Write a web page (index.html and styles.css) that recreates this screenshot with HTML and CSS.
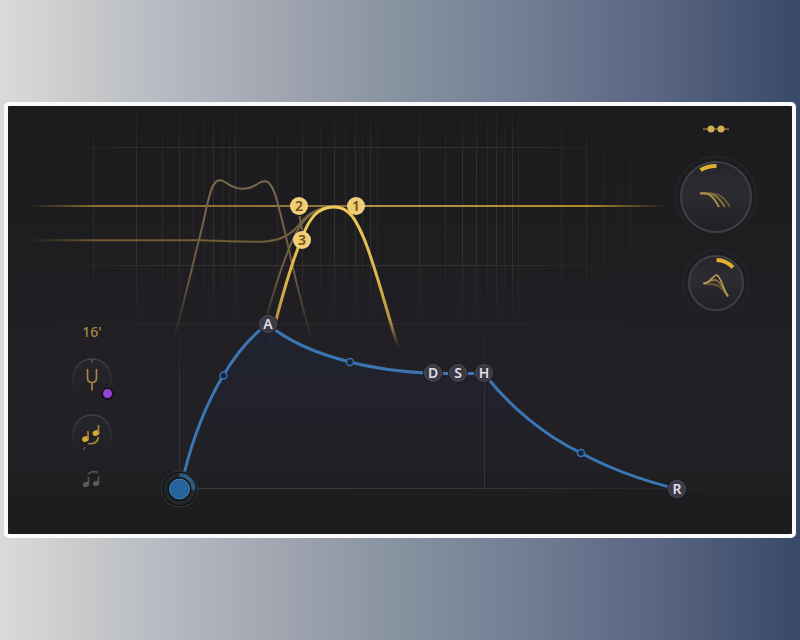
FILE: index.html
```html
<!DOCTYPE html>
<html lang="en">
<head>
<meta charset="utf-8">
<meta name="viewport" content="width=device-width, initial-scale=1">
<title>Filter and envelope</title>
<link rel="stylesheet" href="styles.css">
</head>
<body>
<main class="panel">
  <div class="graph">
    <svg class="plot" viewBox="8 106 784 428" aria-hidden="true">
      <defs>
        <linearGradient id="rows" gradientUnits="userSpaceOnUse" x1="50" y1="0" x2="630" y2="0">
          <stop offset="0" stop-color="#323234" stop-opacity="0"/><stop offset=".2" stop-color="#323234"/>
          <stop offset=".75" stop-color="#323234"/><stop offset="1" stop-color="#323234" stop-opacity="0"/>
        </linearGradient>
        <linearGradient id="cols" gradientUnits="userSpaceOnUse" x1="0" y1="106" x2="0" y2="328">
          <stop offset="0" stop-color="#303033" stop-opacity=".1"/><stop offset=".25" stop-color="#313134"/>
          <stop offset=".65" stop-color="#313134"/><stop offset="1" stop-color="#303033" stop-opacity="0"/>
        </linearGradient>
        <linearGradient id="lineLeft" gradientUnits="userSpaceOnUse" x1="28" y1="0" x2="300" y2="0">
          <stop offset="0" stop-color="#8c6f30" stop-opacity="0"/><stop offset=".25" stop-color="#8c6f30"/><stop offset="1" stop-color="#907439"/>
        </linearGradient>
        <linearGradient id="lineLow" gradientUnits="userSpaceOnUse" x1="28" y1="0" x2="300" y2="0">
          <stop offset="0" stop-color="#70592c" stop-opacity="0"/><stop offset=".25" stop-color="#70592c"/><stop offset="1" stop-color="#74603a"/>
        </linearGradient>
        <linearGradient id="lineRight" gradientUnits="userSpaceOnUse" x1="355" y1="0" x2="666" y2="0">
          <stop offset="0" stop-color="#b8933f"/><stop offset=".75" stop-color="#b18a2d"/><stop offset="1" stop-color="#b18a2d" stop-opacity="0"/>
        </linearGradient>
        <linearGradient id="band" gradientUnits="userSpaceOnUse" x1="0" y1="180" x2="0" y2="344">
          <stop offset="0" stop-color="#7d694e"/><stop offset=".6" stop-color="#6a5840"/><stop offset="1" stop-color="#60503b" stop-opacity="0"/>
        </linearGradient>
        <linearGradient id="bold" gradientUnits="userSpaceOnUse" x1="0" y1="206" x2="0" y2="348">
          <stop offset="0" stop-color="#f1c957"/><stop offset=".55" stop-color="#dcb247"/><stop offset=".8" stop-color="#b5933f"/><stop offset="1" stop-color="#a78945" stop-opacity="0"/>
        </linearGradient>
        <linearGradient id="area" gradientUnits="userSpaceOnUse" x1="0" y1="325" x2="0" y2="489">
          <stop offset="0" stop-color="#1c2a46" stop-opacity=".36"/><stop offset="1" stop-color="#20233a" stop-opacity=".04"/>
        </linearGradient>
        <linearGradient id="base" gradientUnits="userSpaceOnUse" x1="198" y1="0" x2="740" y2="0">
          <stop offset="0" stop-color="#3c3c3e"/><stop offset=".6" stop-color="#343436"/><stop offset="1" stop-color="#343436" stop-opacity="0"/>
        </linearGradient>
        <linearGradient id="stems" gradientUnits="userSpaceOnUse" x1="0" y1="325" x2="0" y2="489">
          <stop offset="0" stop-color="#353539" stop-opacity="0"/><stop offset=".4" stop-color="#353539"/><stop offset="1" stop-color="#353539"/>
        </linearGradient>
      </defs>
      <g fill="none">
        <path stroke="url(#rows)" d="M50 147.500H630M50 265.500H630"/>
        <path stroke="url(#rows)" opacity=".5" d="M50 324.500H630"/>
        <g stroke="url(#cols)">
          <path d="M136.500 106V328M179.500 106V328M213.500 106V328M235.500 106V328M302.500 106V328M334.500 106V328M355.500 106V328M370.500 106V328M419.500 106V328M462.500 106V328M476.500 106V328M496.500 106V328M512.500 106V328"/>
          <path opacity=".6" d="M93.500 106V328M162.500 106V328M193.500 106V328M204.500 106V328M222.500 106V328M229.500 106V328M277.500 106V328M320.500 106V328M345.500 106V328M362.500 106V328M377.500 106V328M445.500 106V328M487.500 106V328M504.500 106V328M518.500 106V328M561.500 106V328M586.500 106V328"/>
          <path opacity=".3" d="M603.500 106V328M618.500 106V328M630.500 106V328"/>
        </g>
        <path stroke="url(#base)" d="M198 488.500H740"/>
        <path stroke="url(#stems)" d="M179.500 325V470M484.500 325V489"/>
        <path fill="url(#area)" d="M180 489C191 445 204 405 223.500 375C236 356 250 336 267.500 324C290 343 318 354 350 362C377 369 403 372 433 373.500H484C510 405 545 437 581 453C612 470 645 481 677 489Z"/>
        <path stroke="url(#lineLeft)" stroke-width="2" d="M28 206H356"/>
        <path stroke="url(#lineLow)" stroke-width="2" d="M32 240.200H200C225 241 245 242 262 241.700C280 241 291 234 297 227C304 218 312 208 334 206"/>
        <path stroke="url(#band)" stroke-width="2" d="M172 344C184 305 193 262 200 236C206 212 208 197 212 188C216 179 220 179 225 182C237 191 248 191 259 183C266 179 270 181 275 194C285 224 296 292 313 343"/>
        <path stroke="url(#band)" stroke-width="2" d="M266 319C274 290 284 257 296 233C305 216 316 208 334 206.500M268 346L277 318M299.500 216L302 230"/>
        <path stroke="url(#lineRight)" stroke-width="2" d="M355 206H666"/>
        <path stroke="url(#bold)" stroke-width="3" d="M275 324C282 297 291 264 302 238C309 218 318 207 334 207C349 207 356 219 365 241C377 272 386 309 398 347"/>
        <path stroke="#3b76b3" stroke-width="3" d="M184 474C193 438 206 404 223.500 375C236 354 250 337 267.500 324C290 343 318 354 350 362C377 369 403 372 433 373.500H484C510 407 545 436 581 453C612 470 645 481 677 489"/>
        <g fill="#182434" stroke="#3473b4" stroke-width="1.500"><circle cx="223.500" cy="375.500" r="3.500"/><circle cx="350" cy="362" r="3.500"/><circle cx="581" cy="453" r="3.500"/></g>
        <circle cx="179.500" cy="489" r="18" fill="#111315" stroke="#37383b"/>
        <circle cx="179.500" cy="489" r="14" stroke="#242729" stroke-width="4"/>
        <path stroke="#315b7e" stroke-width="4" d="M179.500 475A14 14 0 0 1 193.500 490"/>
        <circle cx="179.500" cy="489" r="10" fill="#25639c" stroke="#4282b6"/>
      </g>
    </svg>
    <button class="node band" style="--x:291;--y:100">2</button>
    <button class="node band" style="--x:348;--y:100">1</button>
    <button class="node band" style="--x:294;--y:134">3</button>
    <button class="node stage" style="--x:260;--y:218">A</button>
    <button class="node stage" style="--x:425;--y:267">D</button>
    <button class="node stage" style="--x:450;--y:267">S</button>
    <button class="node stage" style="--x:476;--y:267">H</button>
    <button class="node stage" style="--x:669;--y:383">R</button>
  </div>
  <div class="controls">
    <section class="pitch" aria-label="Pitch">
      <button class="octave">16'</button>
      <label class="knob small">
        <input type="range" aria-label="Tuning">
        <svg viewBox="0 0 40 40" fill="none" stroke="#a68343" stroke-width="2" aria-hidden="true">
          <defs>
            <linearGradient id="rim" x1="0" y1="0" x2="0" y2="1"><stop stop-color="#424146"/><stop offset=".9" stop-color="#424146" stop-opacity="0"/></linearGradient>
            <linearGradient id="dial" x1="0" y1="0" x2="0" y2="1"><stop stop-color="#27262a"/><stop offset="1" stop-color="#201f23"/></linearGradient>
          </defs>
          <circle cx="20" cy="20" r="19" fill="url(#dial)" stroke="url(#rim)" stroke-width="1.500"/>
          <path stroke="#665438" stroke-width="1.500" d="M20 1V5"/>
          <path stroke-width="1.700" d="M15.500 11V20Q15.500 24.500 20 24.500Q24.500 24.500 24.500 20V11M20 24.500V32.500"/>
          <circle cx="35.500" cy="35.500" r="5.500" fill="#9145d4" stroke="#17131c"/>
        </svg>
      </label>
      <label class="knob small">
        <input type="range" aria-label="Glide">
        <svg viewBox="0 0 40 40" fill="none" stroke="#a6823a" stroke-width="1.700" aria-hidden="true">
          <circle cx="20" cy="20" r="19" fill="url(#dial)" stroke="url(#rim)" stroke-width="1.500"/>
          <g fill="#d5a937" stroke="none"><ellipse cx="13.500" cy="25" rx="3.500" ry="2.800" transform="rotate(-25 13.500 25)"/><ellipse cx="24" cy="19" rx="3.500" ry="2.800" transform="rotate(-25 24 19)"/></g>
          <path d="M16 25V17M26.500 19V11M16 29.500Q25 31 26.500 23"/>
          <path stroke="#665438" d="M13 33L11 36"/>
        </svg>
      </label>
      <button class="legato" aria-label="Legato">
        <svg viewBox="0 0 20 20" fill="none" stroke="#535356" stroke-width="1.700" aria-hidden="true">
          <g fill="#5b5b5e" stroke="none"><ellipse cx="4" cy="14.500" rx="3.200" ry="2.600" transform="rotate(-25 4 14.500)"/><ellipse cx="14" cy="13.500" rx="3.200" ry="2.600" transform="rotate(-25 14 13.500)"/></g>
          <path d="M6.500 14V7M16.500 13V6.500M6 4Q10 0 16 2.500"/>
        </svg>
      </button>
    </section>
    <section class="filter" aria-label="Filter">
      <button class="link" aria-label="Filter routing">
        <svg viewBox="0 0 28 12" aria-hidden="true"><path stroke="#947434" stroke-width="1.500" d="M1 6H27"/><circle cx="9" cy="6" r="3.500" fill="#d3ae55"/><circle cx="19" cy="6" r="3.500" fill="#d3ae55"/></svg>
      </button>
      <label class="knob large">
        <input type="range" aria-label="Cutoff">
        <svg viewBox="0 0 84 84" fill="none" aria-hidden="true">
          <defs><linearGradient id="face" x1="0" y1="0" x2="0" y2="1"><stop stop-color="#242429"/><stop offset=".4" stop-color="#2d2c31"/><stop offset="1" stop-color="#201f23"/></linearGradient></defs>
          <path stroke="#242328" stroke-width="2" d="M21.500 76A40 40 0 1 1 62.500 76"/>
          <circle cx="42" cy="42" r="35" fill="url(#face)" stroke="#413f45" stroke-width="2"/>
          <path stroke="#e0af32" stroke-width="4" d="M26.500 15A31 31 0 0 1 42.500 11"/>
          <g stroke-width="2"><path stroke="#67563a" d="M27 38.500C43 37 49 40 56 52"/><path stroke="#88703f" d="M27 38.500C39 37 43 40 51 52"/><path stroke="#ad8e48" d="M26 38.500C35 37 39 41 45 52"/></g>
        </svg>
      </label>
      <label class="knob medium">
        <input type="range" aria-label="Resonance">
        <svg viewBox="0 0 68 68" fill="none" aria-hidden="true">
          <path stroke="#242328" stroke-width="2" d="M17 62.500A33 33 0 1 1 51 62.500"/>
          <circle cx="34" cy="34" r="27" fill="url(#face)" stroke="#413f45" stroke-width="2"/>
          <path stroke="#e0af32" stroke-width="4" d="M34.500 11A23 23 0 0 1 51 18.500"/>
          <g stroke-width="1.700"><path stroke="#6b5939" d="M22 35C35 34 37 36 46 47"/><path stroke="#88703f" d="M22 35C35 29 34 27 46 47"/><path stroke="#b89a50" d="M21 34.500C29 34 30 27 34.500 26C39 27 40 38 46 47.500"/></g>
        </svg>
      </label>
    </section>
  </div>
</main>
</body>
</html>
```
FILE: styles.css
```css
* { box-sizing: border-box; }

body {
  margin: 0;
  min-height: 100vh;
  display: grid;
  grid-template-columns: minmax(0, 1fr);
  align-items: center;
  padding: 0 4px;
  background: linear-gradient(90deg, #dadada 0%, #c5c7c8 12%, #b7bbc3 20%, #a0a5b0 35%, #8792a0 50%, #717d93 66%, #5a6682 82%, #384969 100%);
  font-family: "Noto Sans", "Open Sans", sans-serif;
}

.panel {
  display: grid;
  border: 4px solid #fafafc;
  border-radius: 5px;
  background: linear-gradient(#1b1b1e 0%, #1e1d20 35%, #222025 62%, #212024 82%, #1d1d1f 92%);
}

.graph,
.controls { grid-area: 1 / 1; }

.graph { position: relative; }

.plot {
  display: block;
  width: 100%;
  height: auto;
}

button {
  margin: 0;
  padding: 0;
  border: 0;
  background: none;
  font: inherit;
  cursor: pointer;
}

/* Handles sit at their own plot coordinates. */
.node {
  position: absolute;
  left: calc(var(--x) / 784 * 100%);
  top: calc(var(--y) / 428 * 100%);
  width: 18px;
  height: 18px;
  border-radius: 50%;
  transform: translate(-50%, -50%);
  font-size: 14px;
  font-weight: 600;
  line-height: 18px;
  text-align: center;
}

.band {
  background: radial-gradient(#edc566, #f4d88c);
  color: #70501a;
}

.stage {
  background: #3b3946;
  box-shadow: inset 0 0 0 1px #4a4854, 0 0 0 1px #1a1a20;
  color: #dedde4;
}

.controls {
  display: flex;
  justify-content: space-between;
  padding: 7px 34px 44px 64px;
  pointer-events: none;
}

.controls button,
.controls label {
  position: relative;
  pointer-events: auto;
}

.pitch,
.filter {
  display: flex;
  flex-direction: column;
  align-items: center;
}

.pitch {
  width: 40px;
  justify-content: flex-end;
  gap: 16px;
}

.filter {
  width: 84px;
  gap: 10px;
}

.octave {
  height: 20px;
  color: #a78546;
  font-size: 14px;
  font-weight: 500;
  line-height: 20px;
}

.knob,
.knob svg,
.legato svg,
.link svg { display: block; }

.knob svg {
  width: 100%;
  height: 100%;
  overflow: visible;
}

.knob input {
  position: absolute;
  inset: 0;
  width: 100%;
  height: 100%;
  margin: 0;
  opacity: 0;
}

.small { width: 40px; height: 40px; }
.medium { width: 68px; height: 68px; }
.large { width: 84px; height: 84px; }

.legato,
.legato svg { width: 20px; height: 20px; }

.link {
  display: flex;
  align-items: center;
  height: 32px;
}

.link svg { width: 28px; height: 12px; }
```
